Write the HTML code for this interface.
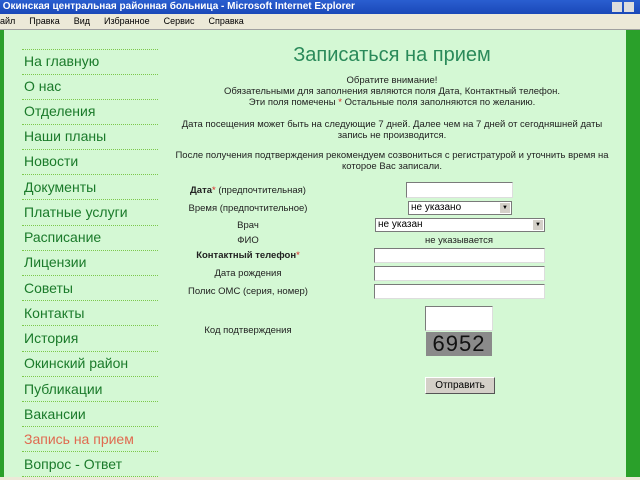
<!DOCTYPE html>
<html><head><meta charset="utf-8"><style>
body{margin:0;width:640px;height:480px;overflow:hidden;background:#d4f8d4;font-family:"Liberation Sans",Arial,sans-serif;position:relative}
.a{position:absolute;white-space:nowrap}
#tb{left:0;top:0;width:640px;height:14px;background:linear-gradient(#2a5ed0,#1a48b8);color:#fff;font-size:10px;font-weight:bold;line-height:13px}
#mb{left:0;top:14px;width:640px;height:15px;background:#ece9d8;border-bottom:1px solid #a0a0a0;font-size:9px;line-height:15px;color:#000}
#mb span{margin-right:14px}
.nav{position:absolute;left:24px;font-size:14px;color:#1a7a2a}
.dl{position:absolute;left:22px;width:136px;border-top:1px dotted #7cc84c}
.c{position:absolute;font-size:9.5px;color:#222;text-align:center}
.lab{position:absolute;left:170px;width:156px;text-align:center;font-size:9.5px;color:#222}
.in{position:absolute;background:#fff;border:1px solid #7a7a7a;border-right-color:#ddd;border-bottom-color:#ddd;box-sizing:border-box}
.sel{position:absolute;background:#fff;border:1px solid #7a7a7a;box-sizing:border-box;font-size:10px;line-height:12px;padding-left:2px}
.sel b{position:absolute;right:1px;top:1px;width:10px;height:10px;background:#d4d0c8;font-size:6px;text-align:center;line-height:10px}
.r{color:#d22}
</style></head><body>
<div class="a" id="tb">&nbsp;Окинская центральная районная больница - Microsoft Internet Explorer</div>
<div class="a" style="left:612px;top:2px;width:10px;height:10px;background:#ddd"></div>
<div class="a" style="left:624px;top:2px;width:10px;height:10px;background:#ddd"></div>
<div class="a" id="mb"><span>айл</span><span>Правка</span><span>Вид</span><span>Избранное</span><span>Сервис</span><span>Справка</span></div>
<div class="a" style="left:0;top:30px;width:4px;height:448px;background:#2aa02a"></div>
<div class="a" style="left:626px;top:30px;width:14px;height:448px;background:#2aa02a"></div>
<div class="a" style="left:0;top:477px;width:640px;height:3px;background:#ece9d8"></div>

<div class="dl" style="top:49px"></div><div class="nav" style="top:53px">На главную</div>
<div class="dl" style="top:74px"></div><div class="nav" style="top:78px">О нас</div>
<div class="dl" style="top:99px"></div><div class="nav" style="top:103px">Отделения</div>
<div class="dl" style="top:124px"></div><div class="nav" style="top:128px">Наши планы</div>
<div class="dl" style="top:149px"></div><div class="nav" style="top:153px">Новости</div>
<div class="dl" style="top:174px"></div><div class="nav" style="top:179px">Документы</div>
<div class="dl" style="top:199px"></div><div class="nav" style="top:204px">Платные услуги</div>
<div class="dl" style="top:225px"></div><div class="nav" style="top:229px">Расписание</div>
<div class="dl" style="top:250px"></div><div class="nav" style="top:254px">Лицензии</div>
<div class="dl" style="top:275px"></div><div class="nav" style="top:280px">Советы</div>
<div class="dl" style="top:300px"></div><div class="nav" style="top:305px">Контакты</div>
<div class="dl" style="top:325px"></div><div class="nav" style="top:330px">История</div>
<div class="dl" style="top:351px"></div><div class="nav" style="top:355px">Окинский район</div>
<div class="dl" style="top:376px"></div><div class="nav" style="top:381px">Публикации</div>
<div class="dl" style="top:401px"></div><div class="nav" style="top:406px">Вакансии</div>
<div class="dl" style="top:426px"></div><div class="nav" style="top:431px;color:#e06a50">Запись на прием</div>
<div class="dl" style="top:451px"></div><div class="nav" style="top:456px">Вопрос - Ответ</div>
<div class="dl" style="top:476px"></div>

<div class="c" style="left:170px;width:444px;top:44px;font-size:20px;color:#2a8a5a">Записаться на прием</div>
<div class="c" style="left:170px;width:444px;top:75px;line-height:11px">Обратите внимание!<br>Обязательными для заполнения являются поля Дата, Контактный телефон.<br>Эти поля помечены <span class="r">*</span> Остальные поля заполняются по желанию.</div>
<div class="c" style="left:170px;width:444px;top:119px;line-height:11px">Дата посещения может быть на следующие 7 дней. Далее чем на 7 дней от сегодняшней даты<br>запись не производится.</div>
<div class="c" style="left:170px;width:444px;top:150px;line-height:11px">После получения подтверждения рекомендуем созвониться с регистратурой и уточнить время на<br>которое Вас записали.</div>

<div class="lab" style="top:185px"><b>Дата</b><span class="r">*</span> (предпочтительная)</div>
<div class="in" style="left:406px;top:182px;width:107px;height:16px"></div>
<div class="lab" style="top:203px">Время (предпочтительное)</div>
<div class="sel" style="left:408px;top:201px;width:104px;height:14px">не указано<b>▼</b></div>
<div class="lab" style="top:220px">Врач</div>
<div class="sel" style="left:375px;top:218px;width:170px;height:14px">не указан<b>▼</b></div>
<div class="lab" style="top:235px">ФИО</div>
<div class="c" style="left:374px;width:170px;top:235px">не указывается</div>
<div class="lab" style="top:250px"><b>Контактный телефон</b><span class="r">*</span></div>
<div class="in" style="left:374px;top:248px;width:171px;height:15px"></div>
<div class="lab" style="top:268px">Дата рождения</div>
<div class="in" style="left:374px;top:266px;width:171px;height:15px"></div>
<div class="lab" style="top:286px">Полис ОМС (серия, номер)</div>
<div class="in" style="left:374px;top:284px;width:171px;height:15px"></div>
<div class="lab" style="top:325px">Код подтверждения</div>
<div class="in" style="left:425px;top:306px;width:68px;height:25px"></div>
<div class="a" style="left:426px;top:332px;width:66px;height:24px;background:#8a8a8a;color:#111;font-size:22px;line-height:24px;text-align:center;letter-spacing:1px">6952</div>
<div class="a" style="left:425px;top:377px;width:70px;height:17px;background:#d4d0c8;border:1px solid;border-color:#fff #555 #555 #fff;box-sizing:border-box;font-size:10px;text-align:center;line-height:15px">Отправить</div>
</body></html>
